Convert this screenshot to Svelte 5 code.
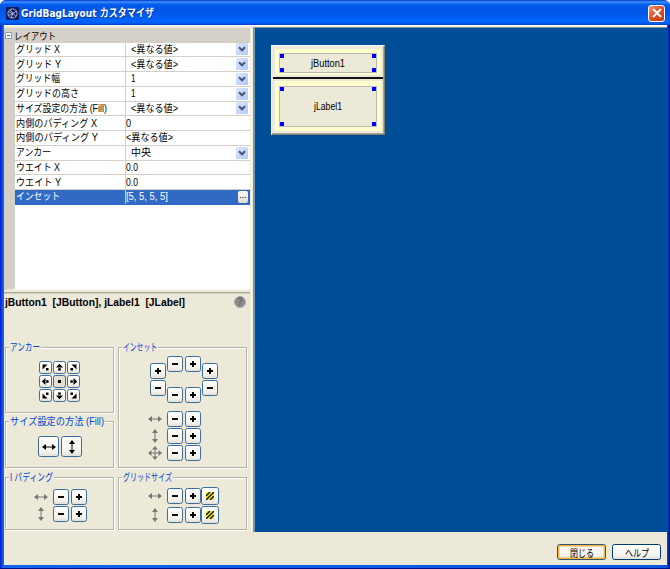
<script>
  const rows = [
    { name: 'グリッド X', nw: 44, value: '<異なる値>', vw: 47, kind: 'combo' },
    { name: 'グリッド Y', nw: 45, value: '<異なる値>', vw: 47, kind: 'combo' },
    { name: 'グリッド幅', nw: 44, value: '1', vw: 4.5, kind: 'combo' },
    { name: 'グリッドの高さ', nw: 63, value: '1', vw: 4.5, kind: 'combo' },
    { name: 'サイズ設定の方法 (Fill)', nw: 91, value: '<異なる値>', vw: 47, kind: 'combo' },
    { name: '内側のパディング X', nw: 81, value: '0', vw: 5 },
    { name: '内側のパディング Y', nw: 82, value: '<異なる値>', vw: 47 },
    { name: 'アンカー', nw: 35, value: '中央', vw: 20, kind: 'combo' },
    { name: 'ウエイト X', nw: 44, value: '0.0', vw: 12 },
    { name: 'ウエイト Y', nw: 45, value: '0.0', vw: 12 },
    { name: 'インセット', nw: 44, value: '[5, 5, 5, 5]', vw: 42, kind: 'more' }
  ];
  const anchorAngles = [-45, 0, 45, -90, null, 90, -135, 180, 135];
  const handles = ['tl', 'tr', 'bl', 'br'];

  function fit(node, width) {
    const natural = node.getBoundingClientRect().width;
    node.style.transform = `scaleX(${width / natural})`;
    node.style.marginRight = `${width - natural}px`;
  }
</script>

{#snippet label(text, width)}<span class="fit" use:fit={width}>{text}</span>{/snippet}

{#snippet pm(sign)}
  <button class="pm" aria-label={sign === '+' ? 'plus' : 'minus'}>
    <svg width="8" height="8" viewBox="0 0 8 8"><path d={sign === '+' ? 'M1 4H7M4 1V7' : 'M1 4H7'} stroke="#000" stroke-width="1.9" /></svg>
  </button>
{/snippet}

{#snippet arrow(dir, color)}
  <svg width="16" height="16" viewBox="0 0 16 16" fill={color} stroke={color}>
    {#if dir === 'h'}
      <path d="M4 8H12" stroke-width="1" /><path stroke="none" d="M1 8L5 5V11ZM15 8L11 5V11Z" />
    {:else if dir === 'v'}
      <path d="M8 4V12" stroke-width="1" /><path stroke="none" d="M8 1L5 5H11ZM8 15L5 11H11Z" />
    {:else}
      <path d="M3 8H13M8 3V13" stroke-width="1" /><path stroke="none" d="M8 1L5 4.5H11ZM8 15L5 11.5H11ZM1 8L4.5 5V11ZM15 8L11.5 5V11Z" />
    {/if}
  </svg>
{/snippet}

{#snippet stripes()}
  <button class="stripe" aria-label="grid">
    <svg width="8" height="8" viewBox="0 0 8 8"><rect width="8" height="8" fill="#f4ef16" /><path d="M0 4L4 0M0 8L8 0M4 8L8 4" stroke="#111" stroke-width="1.4" /></svg>
  </button>
{/snippet}

<div class="window">
  <header>
    <svg class="logo" width="13" height="13" viewBox="0 0 13 13"><rect width="13" height="13" rx="1" fill="#111b61" /><g fill="none" stroke="#c9d5f5" stroke-width=".8"><circle cx="6.5" cy="6.5" r="4.6" /><path d="M2.5 4.5L6.5 6.8L10.5 4M6.5 6.8L5.5 11M4 2.8L9.8 9.5M2.5 8.5L6.5 6.8" /></g></svg>
    <h1>{@render label('GridBagLayout カスタマイザ', 133)}</h1>
    <button class="close" aria-label="close"><svg width="14" height="14" viewBox="0 0 14 14"><path d="M3 3L11 11M11 3L3 11" stroke="#fff" stroke-width="2" /></svg></button>
  </header>

  <div class="body">
    <main>
      <aside>
        <section class="sheet">
          <div class="category"><i class="toggle"></i>{@render label('レイアウト', 42)}</div>
          {#each rows as row}
            <div class="row" class:selected={row.kind === 'more'}>
              <div class="name">{@render label(row.name, row.nw)}</div>
              <div class="value" class:combo={row.kind === 'combo'}>
                {@render label(row.value, row.vw)}
                {#if row.kind === 'combo'}
                  <i class="drop"><svg width="12" height="12" viewBox="0 0 12 12"><path d="M3 4.3L6 7.3L9 4.3" fill="none" stroke="#42567f" stroke-width="2" /></svg></i>
                {:else if row.kind === 'more'}
                  <i class="more">...</i>
                {/if}
              </div>
            </div>
          {/each}
        </section>

        <section class="tools">
          <div class="selection"><strong>{@render label('jButton1  [JButton], jLabel1  [JLabel]', 180)}</strong><i class="help">?</i></div>
          <div class="groups">
            <div class="col left">
              <div class="group anchor">
                <h2>{@render label('アンカー', 30)}</h2>
                <div class="nine">
                  {#each anchorAngles as angle}
                    <button class:pressed={angle === null} aria-label="anchor">
                      <svg width="9" height="9" viewBox="0 0 9 9">
                        {#if angle === null}
                          <rect x="3" y="3" width="3" height="3" />
                        {:else if angle % 90 === 0}
                          <g transform={`rotate(${angle} 4.5 4.5)`}><path d="M4.5 .8L8 4.5H1Z" /><rect x="3.2" y="5.2" width="2.6" height="2.4" /></g>
                        {:else}
                          <g transform={`rotate(${angle + 45} 4.5 4.5)`}><path d="M1.5 1.5H6.5L1.5 6.5Z" /><rect x="5" y="5" width="2.5" height="2.5" /></g>
                        {/if}
                      </svg>
                    </button>
                  {/each}
                </div>
              </div>
              <div class="group fill">
                <h2>{@render label('サイズ設定の方法 (Fill)', 94)}</h2>
                <button aria-label="horizontal">{@render arrow('h', '#000')}</button>
                <button aria-label="vertical">{@render arrow('v', '#000')}</button>
              </div>
              <div class="group ipad">
                <h2>{@render label('I パディング', 43)}</h2>
                <div class="line">{@render arrow('h', '#777')}{@render pm('-')}{@render pm('+')}</div>
                <div class="line">{@render arrow('v', '#777')}{@render pm('-')}{@render pm('+')}</div>
              </div>
            </div>
            <div class="col right">
              <div class="group inset">
                <h2>{@render label('インセット', 34)}</h2>
                <div class="ring">
                  <div class="side">{@render pm('+')}{@render pm('-')}</div>
                  <div class="mid">
                    <div class="pair">{@render pm('-')}{@render pm('+')}</div>
                    <div class="pair">{@render pm('-')}{@render pm('+')}</div>
                  </div>
                  <div class="side">{@render pm('+')}{@render pm('-')}</div>
                </div>
                {#each ['h', 'v', 'all'] as dir}
                  <div class="line">{@render arrow(dir, '#777')}{@render pm('-')}{@render pm('+')}</div>
                {/each}
              </div>
              <div class="group gsize">
                <h2>{@render label('グリッドサイズ', 49)}</h2>
                <div class="line">{@render arrow('h', '#777')}{@render pm('-')}{@render pm('+')}{@render stripes()}</div>
                <div class="line">{@render arrow('v', '#777')}{@render pm('-')}{@render pm('+')}{@render stripes()}</div>
              </div>
            </div>
          </div>
        </section>
      </aside>

      <div class="canvas">
        <div class="container">
          <div class="cell one"><div class="comp">{@render label('jButton1', 34)}{#each handles as h}<i class={h}></i>{/each}</div></div>
          <div class="cell two"><div class="comp">{@render label('jLabel1', 28)}{#each handles as h}<i class={h}></i>{/each}</div></div>
        </div>
      </div>
    </main>
    <footer>
      <button class="default">{@render label('閉じる', 24)}</button>
      <button>{@render label('ヘルプ', 24)}</button>
    </footer>
  </div>
</div>

<style>
  :global(body) { background: #fff; overflow: hidden; }
  * { box-sizing: border-box; }
  .window { width: 670px; height: 569px; display: flex; flex-direction: column; padding: 0 3px 3px; background: linear-gradient(90deg, #0019cf 0, #0831d9 1px, #1663eb 3px, #0855dd 667px, #0019a0 669px); border-bottom: 1px solid #00138c; border-radius: 6px 6px 0 0; overflow: hidden; font-family: "Liberation Sans", "Noto Sans CJK JP", sans-serif; font-size: 10px; color: #000; }
  .fit { display: inline-block; white-space: pre; transform-origin: 0 50%; flex: none; }
  h1, h2 { margin: 0; }
  button { padding: 0; margin: 0; font: inherit; color: inherit; display: flex; align-items: center; justify-content: center; flex: none; border: 1px solid #3d6d9c; border-radius: 2.5px; background: linear-gradient(#fff, #f4f3ee 75%, #e2dfd5); }
  svg { display: block; flex: none; }
  i { font-style: normal; }

  header { height: 25px; flex: none; margin: 0 -3px; padding: 2px 5px 0 6px; display: flex; align-items: center; background: linear-gradient(#0831c9 0, #3d95ff 2px, #0a60ee 4px, #0054e3 8px, #0058ea 14px, #0066ff 21px, #005df5 23px, #0040bd 25px); }
  h1 { flex: 1; margin-left: 2px; font: bold 11px/16px "DejaVu Sans", "Noto Sans CJK JP", sans-serif; color: #fff; text-shadow: 1px 1px 0 #0a2d90; white-space: nowrap; }
  .close { width: 17px; height: 17px; margin-top: -1px; border-color: #fff; border-radius: 3px; background: linear-gradient(135deg, #f09a80, #e0512a 45%, #c83a12); }

  .body { flex: 1; margin-left: 1px; min-height: 0; background: #ece9d8; display: flex; flex-direction: column; }
  main { display: flex; height: 507px; padding-top: 2px; border-top: 1px solid #fff; }
  aside { width: 248px; flex: none; border-right: 1px solid #fff; display: flex; flex-direction: column; }
  .sheet { height: 262px; width: 246px; flex: none; border-left: 11px solid #d4d0c8; background: #fff; border-bottom: 1px solid #f8f7f0; }
  .category { height: 14.6px; margin-left: -11px; background: #d4d0c8; display: flex; align-items: center; gap: 4px; }
  .toggle { width: 7px; height: 7px; margin-left: 1px; border: 1px solid #8aa6bd; background: linear-gradient(#4d6479, #4d6479) center / 3px 1px no-repeat #fff; margin-right: -2px; }
  .row { height: 14.75px; display: flex; border-bottom: 1px solid #d4d0c8; line-height: 13px; }
  .name { width: 111px; padding-left: 1px; border-right: 1px solid #d4d0c8; display: flex; align-items: center; }
  .value { flex: 1; display: flex; align-items: center; }
  .combo { padding-left: 5px; }
  .drop { margin-left: auto; margin-right: 2px; width: 12px; height: 12px; border-radius: 1px; background: linear-gradient(135deg, #dce7fe, #b3c8f5); }
  .selected { background: #316ac5; border-color: #316ac5; color: #fff; }
  .selected .name { border-color: #b7c9e7; }
  .more { margin-left: auto; margin-right: 2px; width: 10px; height: 12px; border-radius: 2px; background: linear-gradient(#fff, #dedace); color: #000; line-height: 9px; text-align: center; font-size: 9px; }

  .tools { flex: 1; min-height: 0; margin-top: 2px; width: 246px; border-top: 1px solid #aca899; box-shadow: inset 0 1px 0 #d0cdbd; padding-left: 1px; }
  .selection { height: 54px; display: flex; align-items: flex-start; justify-content: space-between; }
  strong { font: bold 10.5px/18px "Liberation Sans", sans-serif; }
  .help { width: 12px; height: 12px; margin: 3px 4px 0 0; border-radius: 50%; background: #8d8d8d; border: 1px solid #aaa; color: #686868; font: bold 10px/10px "Liberation Sans", sans-serif; text-align: center; }
  .groups { display: flex; gap: 4px; }
  .col { display: flex; flex-direction: column; }
  .left { width: 109px; }
  .right { width: 129px; gap: 9px; }
  .group { position: relative; border: 1px solid #b5b3a5; box-shadow: 1px 1px 0 #fff, inset 1px 1px 0 #fff; }
  h2 { position: absolute; left: 3px; top: -8px; height: 15px; padding: 0 1px; background: #ece9d8; color: #0046d5; font-weight: normal; font-size: 10.5px; line-height: 14px; white-space: nowrap; }
  .anchor { height: 66px; padding: 13px 0 0 33px; margin-bottom: 8px; }
  .nine { display: grid; grid-template-columns: repeat(3, 13px); gap: 1px; }
  .nine button { width: 13px; height: 13px; }
  .nine .pressed { background: #e3dfd2; }
  .fill { height: 47px; padding: 14px 0 0 32px; display: flex; gap: 2px; margin-bottom: 9px; }
  .fill button { width: 21px; height: 21px; }
  .line { display: flex; align-items: center; gap: 1.4px; height: 17.3px; }
  .line > svg { margin-right: 3px; }
  .pm { width: 16px; height: 16px; }
  .ipad { height: 53px; padding: 10px 0 0 27px; }
  .inset { height: 121px; }
  .ring { display: flex; align-items: center; gap: 1.4px; margin: 8px 0 7px 31px; height: 47px; }
  .side { display: flex; flex-direction: column; gap: 1.3px; }
  .mid { height: 47px; display: flex; flex-direction: column; justify-content: space-between; }
  .pair { display: flex; gap: 1.4px; }
  .inset .line, .gsize .line { margin-left: 28px; }
  .gsize { height: 53px; padding-top: 8.5px; }
  .gsize .line { height: 18.7px; }
  .stripe { width: 18px; height: 18px; margin-left: -1px; }

  .canvas { flex: 1; margin: -1px 0 0 1px; background: #004e98; border-left: 2px solid #7c98a8; border-top: 1px solid #7c98a8; position: relative; }
  .container { position: absolute; left: 16px; top: 17px; width: 114px; height: 90px; padding: 2px; border: 1px solid #fff; border-right: 1px solid #827f72; border-bottom-color: #827f72; background: #ece9d8; box-shadow: inset -1px -1px 0 #aca899; }
  .cell { background: #ffffcc; background-clip: content-box; }
  .one { height: 31px; border-bottom: 2px solid #111; margin: 0 -1px; padding: 1px 2px 2px 2px; }
  .two { height: 53px; padding: 2px 1px 1px 1px; }
  .comp { position: relative; background: #ece9d8; border: 1px solid #b8b8b8; display: flex; align-items: center; justify-content: center; }
  .one .comp { margin: 4px 4px 0; height: 20px; }
  .two .comp { margin: 0 4px; top: 5px; height: 41px; }
  .comp i { position: absolute; width: 4px; height: 4px; background: #00f; }
  .tl { left: 0; top: 0; } .tr { right: 0; top: 0; } .bl { left: 0; bottom: 0; } .br { right: 0; bottom: 0; }

  footer { flex: 1; display: flex; justify-content: flex-end; gap: 6px; padding: 12px 6px 0 0; }
  footer button { width: 49px; height: 16px; border-color: #003c74; }
  footer .default { border-color: #31507a; box-shadow: inset 0 0 0 1.5px #f5b83b; }
</style>
